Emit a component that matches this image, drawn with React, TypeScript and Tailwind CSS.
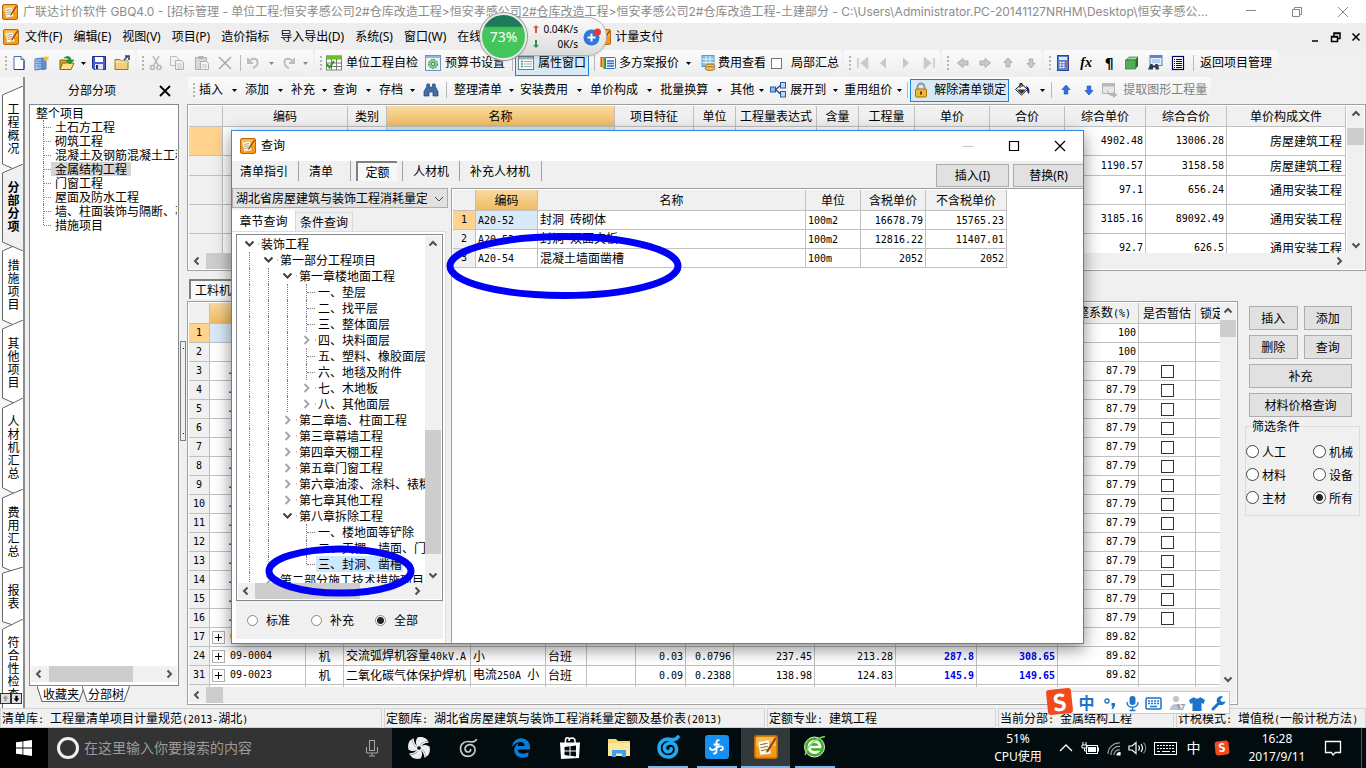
import React from "react";
import { FaEdgeLegacy } from "react-icons/fa6";

const SANS = "font-['Noto_Sans','Noto_Sans_CJK_SC',sans-serif]";
const MONO = "font-['DejaVu_Sans_Mono',monospace] text-[10px]";

/* ---------- text ---------- */

// Sets Latin runs in the half-width face and leaves Chinese runs alone.
function T({ children }: { children: string }) {
  return (
    <>
      {children.split(/([\x20-\x7e]+)/).map((part, i) =>
        i % 2 ? (
          <span key={i} className="whitespace-pre font-['DejaVu_Sans_Mono',monospace] text-[10px]">
            {part}
          </span>
        ) : (
          part
        )
      )}
    </>
  );
}

/* ---------- icons ---------- */

function AppIcon({ className = "size-4" }: { className?: string }) {
  return (
    <svg viewBox="0 0 16 16" className={className} aria-hidden="true">
      <rect x="0.5" y="0.5" width="15" height="15" rx="1.5" fill="#f59a14" stroke="#b8680a" />
      <rect x="1.5" y="1.5" width="13" height="6" fill="#fcc04a" />
      <path d="M2.5 4.5 L10 3 L11.5 12.5 L4 13.5 Z" fill="#fffbe8" stroke="#d9a860" strokeWidth="0.5" />
      <path d="M4 6.5l5-1M4.3 8.5l5-1M4.6 10.5l4-.8" stroke="#8a7450" strokeWidth="0.7" />
      <path d="M14 1.5 L8.5 10 L8 12 L9.8 10.8 L15 2.5 Z" fill="#a5400d" />
    </svg>
  );
}

const icons: Record<string, React.ReactNode> = {
  doc: (
    <>
      <path d="M3 1.500h7l3 3v10H3z" fill="#fff" stroke="#4a6fa5" />
      <path d="M10 1.500v3h3" fill="#cfe0f5" stroke="#4a6fa5" />
      <path d="M3 14.500h10v-9" fill="none" stroke="#1e3f70" />
    </>
  ),
  sheets: (
    <>
      <path d="M2 4l7-1v11l-7 1z" fill="#bcd5f2" stroke="#4a78b8" />
      <path d="M9 3l4 1v10l-4 .5z" fill="#5f92cf" stroke="#4a78b8" />
      <path d="M3 6h5M3 8.500h5M3 11h5M5 4v10M7 4v10" stroke="#5f88c0" strokeWidth="0.8" />
      <path d="M13 0l1 2 2-.5-1 2 1 2-2-.4-1 2-.8-2-2 .4 1-2-1-2 2 .5z" fill="#f5c832" />
    </>
  ),
  open: (
    <>
      <path d="M1 5h5l1 1h5v8H1z" fill="#d9a425" stroke="#8a6510" />
      <path d="M3.500 8H15l-3 6.500H1z" fill="#ffe08a" stroke="#8a6510" />
      <path d="M5 3c4-3 7-1 7 2h3l-4 4-4-4h2.500c0-1.500-2-2.500-4.500-2z" fill="#1f9e2c" stroke="#0c6a17" strokeWidth="0.5" />
    </>
  ),
  save: (
    <>
      <path d="M1.500 1.500h13v13H3l-1.500-1.500z" fill="#4b5bd0" stroke="#1d2880" />
      <rect x="4" y="2" width="8" height="5" fill="#fff" />
      <rect x="4" y="9" width="8" height="5.500" fill="#dfe3f5" />
      <rect x="5" y="10" width="2" height="4" fill="#1d2880" />
    </>
  ),
  folder: (
    <>
      <path d="M1 4.500h5l1.500 1.500H14v8.500H1z" fill="#f0cf7c" stroke="#9c7622" />
      <path d="M1 7h13" stroke="#fff0c0" />
      <path d="M10 5l4-4M11 1h4v4" stroke="#23457a" strokeWidth="1.600" fill="none" />
    </>
  ),
  cut: (
    <>
      <path d="M5 1l5 9M11 1L6 10" stroke="#b5b5b5" strokeWidth="1.500" />
      <circle cx="4.500" cy="12.500" r="2" fill="none" stroke="#b5b5b5" strokeWidth="1.500" />
      <circle cx="11" cy="12.500" r="2" fill="none" stroke="#b5b5b5" strokeWidth="1.500" />
    </>
  ),
  copy: (
    <>
      <path d="M1.500 1.500h6l2 2v7h-8z" fill="#f2f2f2" stroke="#bdbdbd" />
      <path d="M6.500 5.500h6l2 2v7h-8z" fill="#f2f2f2" stroke="#b0b0b0" />
      <path d="M8 9h5M8 11h5M8 13h5" stroke="#c4c4c4" />
    </>
  ),
  paste: (
    <>
      <rect x="1.500" y="2.500" width="11" height="12" fill="#d8d8d8" stroke="#b0b0b0" />
      <rect x="4.500" y="1" width="5" height="3" fill="#b0b0b0" />
      <path d="M6.500 6.500h6l2 2v6h-8z" fill="#f5f5f5" stroke="#b0b0b0" />
      <path d="M8 10h5M8 12h5" stroke="#c4c4c4" />
    </>
  ),
  del: <path d="M2 2l12 12M14 2L2 14" stroke="#a8a8a8" strokeWidth="1.500" />,
  undo: <path d="M3 3v5h5M4 7c3-5 9-4 8.500 1-.3 2.500-2 4-4.500 5" fill="none" stroke="#bcbcbc" strokeWidth="2" />,
  redo: <path d="M13 3v5H8M12 7C9 2 3 3 3.500 8c.3 2.500 2 4 4.500 5" fill="none" stroke="#bcbcbc" strokeWidth="2" />,
  check: (
    <>
      <rect x="0.500" y="1" width="15" height="14" fill="#fff" stroke="#6d8f6d" />
      <rect x="0.500" y="0.500" width="15" height="4" fill="#6abf28" />
      <path d="M5.500 4v11M10.500 4v11M0 8h16M0 11.500h16" stroke="#777" />
      <path d="M1 9l2.500 3.500L8 6" stroke="#2e9c12" strokeWidth="2" fill="none" />
    </>
  ),
  gearDoc: (
    <>
      <rect x="0.500" y="0.500" width="15" height="15" fill="#eaf3fb" stroke="#6a96b8" />
      <rect x="1" y="1" width="14" height="2" fill="#8fb8da" />
      <circle cx="8" cy="9" r="4.500" fill="#8cc78c" stroke="#3d8f4a" strokeDasharray="2 1" />
      <circle cx="8" cy="9" r="1.600" fill="#eaf3fb" stroke="#3d8f4a" />
    </>
  ),
  props: (
    <>
      <rect x="0.500" y="1.500" width="15" height="13" fill="#fff" stroke="#6d7f8f" />
      <rect x="1" y="2" width="14" height="2.500" fill="#9db4c8" />
      <path d="M3 6.500h2M3 9h2M3 11.500h2" stroke="#3f9e5a" strokeWidth="1.300" />
      <path d="M6 6.500h8M6 9h8M6 11.500h8" stroke="#8fa8b8" />
    </>
  ),
  plans: (
    <>
      <rect x="0.500" y="2" width="6" height="10" fill="#e04030" />
      <rect x="2" y="2.500" width="6" height="10.500" fill="#f0c030" />
      <rect x="3.500" y="2" width="6" height="12" fill="#40a840" />
      <rect x="5.500" y="2.500" width="10" height="11" rx="1" fill="#f4f9ff" stroke="#2a6ed0" />
      <path d="M7 6h7M7 8.500h7M7 11h7" stroke="#2a6ed0" strokeWidth="1.300" />
    </>
  ),
  fee: (
    <>
      <rect x="2" y="0.500" width="12" height="11" fill="#7fc4ea" stroke="#4aa0cc" />
      <path d="M2 4h12M2 7.500h12M6 1v10M10 1v10" stroke="#dff2fc" />
      <ellipse cx="10" cy="11" rx="5" ry="2" fill="#e8c070" stroke="#a87820" />
      <ellipse cx="10" cy="13.500" rx="5" ry="2" fill="#e8c070" stroke="#a87820" />
    </>
  ),
  first: <path d="M3 3v10M12.500 3L6.500 8l6 5z" fill="#c8c8c8" stroke="#c8c8c8" strokeWidth="1.500" />,
  prev: <path d="M11 2.500L5 8l6 5.500z" fill="#c8c8c8" />,
  next: <path d="M5 2.500l6 5.500-6 5.500z" fill="#c8c8c8" />,
  last: <path d="M13 3v10M3.500 3L9.500 8l-6 5z" fill="#c8c8c8" stroke="#c8c8c8" strokeWidth="1.500" />,
  left: <path d="M2.500 8L8 3.500V6h5v4H8v2.500z" fill="#c9c9c9" stroke="#adadad" />,
  right: <path d="M13.500 8L8 3.500V6H3v4h5v2.500z" fill="#c9c9c9" stroke="#adadad" />,
  up: <path d="M8 3l4 4.500h-2.200V12H6.200V7.500H4z" fill="#c9c9c9" stroke="#adadad" />,
  down: <path d="M8 13l4-4.500h-2.200V4H6.200v4.500H4z" fill="#c9c9c9" stroke="#adadad" />,
  upBlack: <path d="M8 2l5 6H10v5H6V8H3z" fill="#999" />,
  downBlack: <path d="M8 14l5-6H10V3H6v5H3z" fill="#000" />,
  upBlue: <path d="M8 3l4 4.500h-2.200V12H6.200V7.500H4z" fill="#2f6fe8" stroke="#1c4fb8" strokeWidth="0.700" />,
  downBlue: <path d="M8 13l4-4.500h-2.200V4H6.200v4.500H4z" fill="#2f6fe8" stroke="#1c4fb8" strokeWidth="0.700" />,
  calc: (
    <>
      <rect x="2.500" y="0.500" width="11" height="15" fill="#5c7fd0" stroke="#2c4590" />
      <rect x="4" y="2" width="8" height="3" fill="#d8ecf5" />
      <path d="M4.500 7.500h2M7.500 7.500h2M4.500 10h2M7.500 10h2M4.500 12.500h2M7.500 12.500h2" stroke="#fff" strokeWidth="1.400" />
      <path d="M10.500 7.500h1.500M10.500 10h1.500M10.500 12.500h1.500" stroke="#f05040" strokeWidth="1.400" />
    </>
  ),
  cube: (
    <>
      <path d="M2 5l3-3h9l-2.500 3z" fill="#9ed69a" stroke="#2f7a35" strokeWidth="0.700" />
      <path d="M11.500 5L14 2v9l-2.500 3z" fill="#256b2b" />
      <rect x="1.500" y="5" width="10" height="9" fill="#55ad55" stroke="#2f7a35" strokeWidth="0.700" />
    </>
  ),
  find: (
    <>
      <rect x="3" y="0.500" width="12" height="10" fill="#e3eefb" stroke="#5b87c4" />
      <rect x="3" y="0.500" width="12" height="2.500" fill="#5b87c4" />
      <path d="M5 5h8M5 7h8" stroke="#8fb0da" />
      <path d="M2.500 9l1-2h2l.5 2h2l.5-2h2l1 2 .5 3.500H8.500v-2H6v2H1z" fill="#2d3a4e" transform="translate(0 2)" />
    </>
  ),
  list: (
    <>
      <rect x="2.500" y="1.500" width="11" height="13" fill="#fff" stroke="#000060" strokeWidth="1.200" />
      <path
        d="M4 4.500h1M4 6.500h1M4 8.500h1M4 10.500h1M4 12.500h1M6 4.500h6M6 6.500h6M6 8.500h6M6 10.500h6M6 12.500h6"
        stroke="#000060"
      />
    </>
  ),
  binoculars: (
    <path
      d="M4 2h2.500v3h3V2H12l.5 3 2.500 4.500V14h-5v-4H6v4H1V9.500L3.500 5z"
      fill="#3f6ea8"
      stroke="#1e4478"
      strokeWidth="0.700"
    />
  ),
  expand: (
    <>
      <rect x="0.500" y="5" width="5" height="5" fill="#8fb8ea" stroke="#2a5ea8" />
      <rect x="10.500" y="0.500" width="5" height="5.500" fill="#bcd7f5" stroke="#2a5ea8" />
      <rect x="10.500" y="9.500" width="5" height="5.500" fill="#bcd7f5" stroke="#2a5ea8" />
      <path d="M5.500 7.500l5-4M5.500 7.500l5 4.500" stroke="#1b3f80" strokeWidth="1.300" />
    </>
  ),
  lock: (
    <>
      <path d="M4.500 8V5a3.500 3.500 0 0 1 7 0v3" fill="none" stroke="#8f8f8f" strokeWidth="1.800" />
      <rect x="2.500" y="7" width="11" height="8" rx="1" fill="#f2b632" stroke="#a8700f" />
      <path d="M8 9.500v3" stroke="#5a3a05" strokeWidth="2" />
    </>
  ),
  paint: (
    <>
      <path d="M7.500 2l6 5.500-6 5.500-6-5.500z" fill="#fff" stroke="#111" />
      <path d="M3 7.500h9L7.500 12z" fill="#333" />
      <path d="M6 6V1.500h2V5" fill="none" stroke="#111" />
      <path d="M12 4c3 1 4 4 3 8-2-1-1.500-3-2-4.500z" fill="#101f80" />
    </>
  ),
  extract: (
    <>
      <rect x="0.500" y="1.500" width="12" height="10" fill="#e8e8e8" stroke="#b4b4b4" />
      <rect x="0.500" y="1.500" width="12" height="3" fill="#b9b9b9" />
      <path d="M5 7c2 5 5 4.500 6 4.500V9.500l4.500 3.500-4.500 3v-2c-4 0-6-2-6-7z" fill="#b4b4b4" />
    </>
  ),
};

function Icon({ name, className = "size-4" }: { name: string; className?: string }) {
  return (
    <svg viewBox="0 0 16 16" className={`shrink-0 ${className}`} aria-hidden="true">
      {icons[name]}
    </svg>
  );
}

/* ---------- toolbar pieces ---------- */

function Grip() {
  return (
    <span className="flex w-[11px] shrink-0 flex-col items-center gap-[2px]">
      {[0, 1, 2, 3].map((i) => (
        <i key={i} className="size-[2px] bg-[#b4b4b4]" />
      ))}
    </span>
  );
}
function Tool({ name, label, className = "w-[23px]" }: { name: string; label: string; className?: string }) {
  return (
    <button aria-label={label} className={`flex h-[22px] shrink-0 items-center justify-center ${className}`}>
      <Icon name={name} />
    </button>
  );
}
function Caret({ className = "w-[22px]", gray = false }: { className?: string; gray?: boolean }) {
  return (
    <span className={`flex shrink-0 items-center justify-center ${className}`}>
      <svg viewBox="0 0 5 3" className="h-[3px] w-[5px]" aria-hidden="true">
        <path d="M0 0h5L2.500 3z" fill={gray ? "#888" : "#000"} />
      </svg>
    </span>
  );
}
function Sep({ className = "mx-1" }: { className?: string }) {
  return <i className={`h-4 w-px shrink-0 bg-[#b8b8b8] ${className}`} />;
}
const group = "flex h-[26px] shrink-0 items-center rounded-r bg-linear-to-b from-[#fbfbfb] to-[#eeeeee]";

/* ---------- scroll bars ---------- */

function Arrow({ dir, className = "size-4" }: { dir: "up" | "down" | "left" | "right"; className?: string }) {
  const d = {
    up: "M4.500 9.500L8 6l3.500 3.500",
    down: "M4.500 6.500L8 10l3.500-3.500",
    left: "M9.500 4.500L6 8l3.500 3.500",
    right: "M6.500 4.500L10 8l-3.500 3.500",
  }[dir];
  return (
    <svg viewBox="0 0 16 16" className={`shrink-0 ${className}`} aria-hidden="true">
      <path d={d} fill="none" stroke="#505050" strokeWidth="2" />
    </svg>
  );
}
function VScroll({ thumb, className = "w-4" }: { thumb: string; className?: string }) {
  return (
    <div className={`flex shrink-0 flex-col items-center justify-between bg-[#f0f0f0] ${className}`}>
      <Arrow dir="up" />
      <div className="flex w-full flex-1 flex-col">
        <div className={`w-full bg-[#cdcdcd] ${thumb}`} />
      </div>
      <Arrow dir="down" />
    </div>
  );
}
function HScroll({ thumb, className = "" }: { thumb: string; className?: string }) {
  return (
    <div className={`flex h-4 shrink-0 items-stretch bg-[#f0f0f0] ${className}`}>
      <Arrow dir="left" />
      <div className="flex flex-1">
        <div className={`h-full bg-[#cdcdcd] ${thumb}`} />
      </div>
      <Arrow dir="right" />
    </div>
  );
}

/* ---------- window bars ---------- */

function TitleBar() {
  return (
    <header className="flex h-[23px] shrink-0 items-center bg-white font-['Inter','Noto_Sans_CJK_SC',sans-serif] text-xs text-[#8c8c8c]">
      <AppIcon className="ml-[2px] size-4 shrink-0" />
      <h1 className="ml-[5px] min-w-0 flex-1 overflow-hidden whitespace-nowrap">
        广联达计价软件 GBQ4.0 - [招标管理 - 单位工程:恒安孝感公司2#仓库改造工程&gt;恒安孝感公司2#仓库改造工程&gt;恒安孝感公司2#仓库改造工程-土建部分 -
        C:\Users\Administrator.PC-20141127NRHM\Desktop\恒安孝感公...
      </h1>
      <div className="flex shrink-0">
        {[
          ["最小化", "M3 6.500h10"],
          ["还原", "M3.500 5.500h7v7h-7zM5.500 5.500v-2h7v7h-2"],
          ["关闭", "M3 3l10 10M13 3L3 13"],
        ].map(([label, d]) => (
          <button key={label} aria-label={label} className="flex h-[22px] w-[46px] items-center justify-center">
            <svg viewBox="0 0 16 16" className="size-4">
              <path d={d} fill="none" stroke="#888" />
            </svg>
          </button>
        ))}
      </div>
    </header>
  );
}

function MenuBar() {
  return (
    <nav className={`flex h-[27px] shrink-0 items-center bg-[#eeeeee] text-xs text-black ${SANS}`}>
      <AppIcon className="ml-[3px] size-4 shrink-0" />
      <div className="ml-[6px] flex gap-[11px]">
        {["文件(F)", "编辑(E)", "视图(V)", "项目(P)", "造价指标", "导入导出(D)", "系统(S)", "窗口(W)"].map((m) => (
          <button key={m}>{m}</button>
        ))}
        <button className="w-[138px] text-left">在线</button>
      </div>
      <button className="flex items-center gap-1">
        <AppIcon />
        计量支付
      </button>
      <div className="mr-[2px] ml-auto flex gap-1">
        {[
          ["最小化文档", "M4 12h6"],
          ["还原文档", "M3.500 7.500h6v5h-6zM6 7V4h6v5.500h-2M3 8h7M6 4.500h6"],
          ["关闭文档", "M4.500 4.500l7 7M11.500 4.500l-7 7"],
        ].map(([label, d]) => (
          <button key={label} aria-label={label}>
            <svg viewBox="0 0 16 16" className="size-4">
              <path d={d} fill="none" stroke="#000" strokeWidth="1.500" />
            </svg>
          </button>
        ))}
      </div>
    </nav>
  );
}

function MainToolbar() {
  return (
    <div className={`flex h-[27px] shrink-0 items-start gap-[2px] text-xs ${SANS}`}>
      <div className={group}>
        <Grip />
        <Tool name="doc" label="新建" className="w-4" />
        <Tool name="sheets" label="新建单位工程" className="w-[28px]" />
        <Tool name="open" label="打开" />
        <Caret className="w-[11px]" />
        <Tool name="save" label="保存" className="w-5" />
        <Tool name="folder" label="另存" className="w-[26px]" />
      </div>
      <div className={group}>
        <Grip />
        <Tool name="cut" label="剪切" className="w-4" />
        <Tool name="copy" label="复制" className="w-[26px]" />
        <Tool name="paste" label="粘贴" />
        <Tool name="del" label="删除" />
        <Sep />
        <Tool name="undo" label="撤销" className="w-4" />
        <Caret gray className="w-5" />
        <Tool name="redo" label="重做" className="w-4" />
        <Caret gray className="w-4" />
      </div>
      <div className={`${group} pr-[3px]`}>
        <Grip />
        <button className="flex shrink-0 items-center gap-1">
          <Icon name="check" />
          单位工程自检
        </button>
        <button className="ml-[7px] flex shrink-0 items-center gap-1">
          <Icon name="gearDoc" />
          预算书设置
        </button>
        <Sep className="mr-[2px] ml-[7px]" />
        <button className="flex h-[26px] shrink-0 items-center gap-1 border border-[#1f84d6] bg-[#d8e8f5] px-[2px]">
          <Icon name="props" />
          属性窗口
        </button>
        <Sep className="mx-[5px]" />
        <button className="flex shrink-0 items-center gap-[3px]">
          <Icon name="plans" />
          多方案报价
        </button>
        <Caret className="w-[18px]" />
        <button className="ml-[3px] flex shrink-0 items-center gap-[2px]">
          <Icon name="fee" />
          费用查看
        </button>
        <label className="ml-[5px] flex shrink-0 items-center gap-[9px]">
          <input type="checkbox" className="size-[11px] appearance-none border border-[#777] bg-white" />
          局部汇总
        </label>
      </div>
      <div className={group}>
        <Grip />
        <Tool name="first" label="首条" className="w-4" />
        <Tool name="prev" label="上一条" />
        <Tool name="next" label="下一条" />
        <Tool name="last" label="末条" />
      </div>
      <div className={group}>
        <Grip />
        <Tool name="left" label="左移" className="w-[20px]" />
        <Tool name="right" label="右移" />
        <Tool name="up" label="上移" />
        <Tool name="down" label="下移" />
      </div>
      <div className={`${group} pr-[6px]`}>
        <Grip />
        <Tool name="calc" label="计算器" className="w-4" />
        <button aria-label="函数" className="w-[30px] shrink-0 font-['Liberation_Serif',serif] text-sm font-bold italic leading-4">
          fx
        </button>
        <button aria-label="段落" className="w-4 shrink-0 font-['DejaVu_Sans',sans-serif] text-sm font-bold leading-4">
          ¶
        </button>
        <Tool name="cube" label="图块" className="w-[30px]" />
        <Tool name="find" label="查找" className="w-4" />
        <Tool name="list" label="列表" className="w-[30px]" />
        <Sep className="mr-[6px]" />
        <button className="shrink-0">返回项目管理</button>
      </div>
    </div>
  );
}

function GridToolbar() {
  return (
    <div className={`flex h-[27px] shrink-0 pl-px text-xs ${SANS}`}>
      <div className={`${group} pr-1`}>
        <Grip />
        <button>插入</button>
        <Caret />
        <button>添加</button>
        <Caret />
        <button>补充</button>
        <Caret className="w-[18px]" />
        <button>查询</button>
        <Caret />
        <button>存档</button>
        <Caret className="w-[18px]" />
        <Tool name="binoculars" label="查找" className="w-[19px]" />
        <Sep className="mr-[7px] ml-[6px]" />
        <button>整理清单</button>
        <Caret className="w-[18px]" />
        <button>安装费用</button>
        <Caret />
        <button>单价构成</button>
        <Caret />
        <button>批量换算</button>
        <Caret />
        <button>其他</button>
        <Caret className="w-[14px]" />
        <button className="flex items-center gap-[4px]">
          <Icon name="expand" className="ml-[2px] size-4" />
          展开到
        </button>
        <Caret className="w-[18px]" />
        <button>重用组价</button>
        <Caret className="w-[14px]" />
        <Sep className="mr-[2px] ml-px" />
        <button className="flex h-[23px] items-center gap-[5px] border border-[#1f84d6] bg-[#d8e8f5] px-[2px]">
          <Icon name="lock" />
          解除清单锁定
        </button>
        <Tool name="paint" label="填充" className="w-[26px]" />
        <Caret className="w-[14px]" />
        <Sep className="mr-[2px] ml-[2px]" />
        <Tool name="upBlue" label="上移" />
        <Tool name="downBlue" label="下移" />
        <button disabled className="ml-[2px] flex items-center gap-[5px] text-[#808080]">
          <Icon name="extract" />
          提取图形工程量
        </button>
      </div>
    </div>
  );
}

/* ---------- left side ---------- */

function SideTabs() {
  const tabs = ["工程概况", "分部分项", "措施项目", "其他项目", "人材机汇总", "费用汇总", "报表", "符合性检查"];
  return (
    <div className="relative w-[25px] shrink-0 overflow-hidden border-r-2 border-[#8c8c8c] bg-[#f6f6f6] pt-[13px]">
      {tabs.map((t) => {
        const active = t === "分部分项";
        return (
          <button
            key={t}
            className={`relative flex w-full justify-center pt-3 pb-[14px] pl-1 text-xs leading-[13px] ${active ? "z-10 font-bold" : ""}`}
          >
            <svg
              viewBox="0 0 23 78"
              preserveAspectRatio="none"
              className="absolute -top-1 left-0 h-[calc(100%+9px)] w-full"
              aria-hidden="true"
            >
              <path
                d="M23 0L2.500 8V70L23 78"
                fill={active ? "#f0f0f0" : "#fff"}
                stroke="#666"
                vectorEffect="non-scaling-stroke"
              />
            </svg>
            <span className="relative w-3 break-all">{t}</span>
          </button>
        );
      })}
      <div className="absolute bottom-[4px] left-0 z-20 flex">
        {[
          ["upBlack", "上翻"],
          ["downBlack", "下翻"],
        ].map(([d, label]) => (
          <button key={d} aria-label={label} className="border border-[#333] bg-[#e0e0e0]">
            <Icon name={d} className="size-[9px]" />
          </button>
        ))}
      </div>
    </div>
  );
}

function SectionPanel() {
  const rows = [
    "土石方工程",
    "砌筑工程",
    "混凝土及钢筋混凝土工程",
    "金属结构工程",
    "门窗工程",
    "屋面及防水工程",
    "墙、柱面装饰与隔断、幕墙工程",
    "措施项目",
  ];
  return (
    <section className="flex w-[162px] shrink-0 flex-col pr-2 pl-1 text-xs">
      <div className={`flex h-[27px] shrink-0 items-center ${SANS}`}>
        <h2 className="ml-[39px]">分部分项</h2>
        <button aria-label="关闭面板" className="mr-[8px] ml-auto">
          <svg viewBox="0 0 12 12" className="size-3">
            <path d="M1 1l10 10M11 1L1 11" stroke="#000" strokeWidth="1.800" />
          </svg>
        </button>
      </div>
      <div className="flex flex-1 flex-col border border-[#828790] bg-white">
        <ul className="min-h-0 flex-1 overflow-hidden pt-px pr-px leading-[14px] whitespace-nowrap">
          <li className="pl-[6px]">整个项目</li>
          {rows.map((r, i) => (
            <li key={r} className="flex h-[14px] items-start overflow-hidden pl-[13px]">
              <span
                className={`w-0 shrink-0 border-l border-dotted border-[#808080] ${i === rows.length - 1 ? "h-[7px]" : "h-[14px]"}`}
              />
              <span className="mt-[7px] w-[7px] shrink-0 border-t border-dotted border-[#808080]" />
              <span className={`shrink-0 px-1 ${r === "金属结构工程" ? "bg-[#d4d4d4]" : ""}`}>{r}</span>
            </li>
          ))}
        </ul>
        <HScroll thumb="ml-[2px] w-[84px]" className="mx-px mb-[3px]" />
      </div>
      <div className="flex h-[22px] shrink-0 pl-[8px]">
        {["收藏夹", "分部树"].map((t) => (
          <button key={t} className="relative -mr-[3px] h-4 px-[6px] leading-4">
            <svg viewBox="0 0 48 16" preserveAspectRatio="none" className="absolute inset-0 size-full" aria-hidden="true">
              <path d="M0 0L5 15.500H42L47.500 0" fill="#fff" stroke="#666" />
            </svg>
            <span className="relative">{t}</span>
          </button>
        ))}
      </div>
    </section>
  );
}

/* ---------- grids ---------- */

const cell = "overflow-hidden border-r border-b border-[#c0c0c0] whitespace-nowrap";
const orange = "bg-linear-to-b from-[#f9d9a0] to-[#efbb61]";
const gridTable = "table-fixed border-separate border-spacing-0 text-xs leading-4";

function BillGrid() {
  const cols: [string, string][] = [
    ["w-[34px]", ""],
    ["w-[125px]", "编码"],
    ["w-[39px]", "类别"],
    ["w-[228px]", "名称"],
    ["w-[79px]", "项目特征"],
    ["w-[42px]", "单位"],
    ["w-[81px]", "工程量表达式"],
    ["w-[42px]", "含量"],
    ["w-[56px]", "工程量"],
    ["w-[75px]", "单价"],
    ["w-[75px]", "合价"],
    ["w-[81px]", "综合单价"],
    ["w-[81px]", "综合合价"],
    ["w-[119px]", "单价构成文件"],
  ];
  const rows: [string, string, string, string][] = [
    ["h-[29px]", "4902.48", "13006.28", "房屋建筑工程"],
    ["h-[20px]", "1190.57", "3158.58", "房屋建筑工程"],
    ["h-[29px]", "97.1", "656.24", "通用安装工程"],
    ["h-[29px]", "3185.16", "89092.49", "通用安装工程"],
    ["h-[29px]", "92.7", "626.5", "通用安装工程"],
  ];
  return (
    <div className="flex h-[167px] shrink-0 flex-col border border-[#a0a0a0] bg-white p-px">
      <div className="flex min-h-0 flex-1">
        <div className="min-w-0 flex-1 overflow-hidden">
          <table className={`${gridTable} w-[1157px]`}>
            <thead>
              <tr>
                {cols.map(([w, h], i) => (
                  <th key={i} className={`${cell} ${w} h-[21px] font-normal ${h === "名称" ? orange : "bg-[#f0f0f0]"}`}>
                    {h}
                  </th>
                ))}
              </tr>
            </thead>
            <tbody>
              {rows.map(([h, a, b, c], r) => (
                <tr key={r}>
                  <th className={`${cell} ${h} ${r ? "bg-[#f0f0f0]" : "bg-[#ffd28d]"}`} />
                  {cols.slice(1, 11).map(([, n]) => (
                    <td key={n} className={`${cell} ${r === 0 && n === "名称" ? "bg-[#d9e9f7]" : ""}`} />
                  ))}
                  <td className={`${cell} pr-[2px] text-right ${MONO}`}>{a}</td>
                  <td className={`${cell} pr-[2px] text-right ${MONO}`}>{b}</td>
                  <td className={`${cell} pr-[3px] text-right`}>{c}</td>
                </tr>
              ))}
            </tbody>
          </table>
        </div>
        <VScroll className="w-[17px]" thumb="mt-[6px] h-[17px]" />
      </div>
      <HScroll thumb="ml-px w-[120px]" className="pr-[17px]" />
    </div>
  );
}

function ResourceGrid() {
  const widths = [
    "w-[21px]", "w-[96px]", "w-[38px]", "w-[127px]", "w-[75px]", "w-[41px]", "w-[49px]", "w-[50px]",
    "w-[48px]", "w-[81px]", "w-[81px]", "w-[81px]", "w-[81px]", "w-[81px]", "w-[57px]", "w-[60px]",
  ];
  const heads = ["", "", "", "", "", "", "", "", "", "", "", "", "", "调整系数(%)", "是否暂估", "锁定"];
  const nums = Array.from({ length: 17 }, (_, i) => i + 1).concat([24, 31]);
  const detail: Record<number, string[]> = {
    17: ["0", "", "", "", "", "", "", "", "", "", "", ""],
    24: ["09-0004", "机", "交流弧焊机容量40kV.A", "小", "台班", "", "0.03", "0.0796", "237.45", "213.28", "287.8", "308.65"],
    31: ["09-0023", "机", "二氧化碳气体保护焊机", "电流250A 小", "台班", "", "0.09", "0.2388", "138.98", "124.83", "145.9", "149.65"],
  };
  return (
    <div className="flex min-w-0 flex-1 flex-col border border-[#a0a0a0] bg-white p-px">
      <div className="flex min-h-0 flex-1">
        <div className="min-w-0 flex-1 overflow-hidden">
          <table className={`${gridTable} w-[1067px]`}>
            <thead>
              <tr>
                {heads.map((h, i) => (
                  <th
                    key={i}
                    className={`${cell} ${widths[i]} h-[21px] font-normal ${i === 15 ? "pl-1 text-left" : ""} ${i === 1 ? orange : "bg-[#f0f0f0]"}`}
                  >
                    <T>{h}</T>
                  </th>
                ))}
              </tr>
            </thead>
            <tbody>
              {nums.map((n) => {
                const d = detail[n];
                const factor = n <= 2 ? "100" : n <= 16 ? "87.79" : "89.82";
                return (
                  <tr key={n}>
                    <th className={`${cell} h-[19px] font-normal ${MONO} ${n === 1 ? "bg-[#ffd28d]" : "bg-[#f0f0f0]"}`}>{n}</th>
                    <td className={`${cell} ${n === 1 ? "bg-[#d9e9f7]" : ""} ${MONO}`}>
                      {d ? (
                        <span className="flex items-center gap-[5px] pl-[2px]">
                          <button
                            aria-label="展开"
                            className="flex size-[13px] items-center justify-center border border-[#b0b0b0] bg-white"
                          >
                            <svg viewBox="0 0 7 7" className="size-[7px]">
                              <path d="M0 3.500h7M3.500 0v7" stroke="#000" />
                            </svg>
                          </button>
                          {d[0]}
                        </span>
                      ) : (
                        n > 2 && <span className="pl-[17px]">.</span>
                      )}
                    </td>
                    {Array.from({ length: 11 }, (_, i) => (
                      <td
                        key={i}
                        className={`${cell} px-[2px] ${i === 0 ? "text-center" : i > 4 ? "text-right" : ""} ${i > 8 ? "font-bold text-[#0000f0]" : ""}`}
                      >
                        <T>{d ? d[i + 1] : ""}</T>
                      </td>
                    ))}
                    <td className={`${cell} pr-[2px] text-right ${MONO}`}>{factor}</td>
                    <td className={cell}>
                      {n > 2 && n < 17 && (
                        <input
                          type="checkbox"
                          aria-label={`暂估 ${n}`}
                          className="mx-auto block size-[13px] appearance-none border border-[#333] bg-white"
                        />
                      )}
                    </td>
                    <td className={cell} />
                  </tr>
                );
              })}
              <tr>
                {widths.map((w, i) => (
                  <td key={i} className={`${cell} h-[19px] ${i === 0 ? "bg-[#f0f0f0]" : ""}`} />
                ))}
              </tr>
            </tbody>
          </table>
        </div>
        <VScroll className="w-4" thumb="mt-px h-[17px]" />
      </div>
      <HScroll thumb="ml-px w-[17px]" className="pr-4" />
    </div>
  );
}

const winButton = "border border-[#adadad] bg-[#e1e1e1] text-xs";
const radio =
  "appearance-none rounded-full border bg-white checked:bg-[radial-gradient(circle,#222_0_3px,#fff_4px)]";

function ActionPane() {
  return (
    <aside className="w-[128px] shrink-0 pt-[5px] pr-[6px] pl-[7px] text-xs">
      <div className="mr-[8px] ml-1 grid auto-rows-[24px] grid-cols-2 gap-x-[6px] gap-y-[5px]">
        <button className={winButton}>插入</button>
        <button className={winButton}>添加</button>
        <button className={winButton}>删除</button>
        <button className={winButton}>查询</button>
        <button className={`${winButton} col-span-2`}>补充</button>
        <button className={`${winButton} col-span-2`}>材料价格查询</button>
      </div>
      <fieldset className="mt-[2px] border border-[#dcdcdc] pt-[7px] pb-[6px]">
        <legend className="ml-[5px] px-px leading-[14px]">筛选条件</legend>
        <div className="grid grid-cols-[67px_1fr]">
          {["人工", "机械", "材料", "设备", "主材", "所有"].map((r) => (
            <label key={r} className="flex h-[23px] items-center gap-[3px] whitespace-nowrap">
              <input
                type="radio"
                name="filter"
                defaultChecked={r === "所有"}
                className={`size-[13px] shrink-0 border-[#444] ${radio}`}
              />
              {r}
            </label>
          ))}
        </div>
      </fieldset>
    </aside>
  );
}

/* ---------- query dialog ---------- */

type Node = { t: string; level: number; lines: boolean[]; kind: "open" | "closed" | "leaf" | "end" };
const L3 = [true, true, true];
const tree: Node[] = [
  { t: "装饰工程", level: 0, lines: [], kind: "open" },
  { t: "第一部分工程项目", level: 1, lines: [true], kind: "open" },
  { t: "第一章楼地面工程", level: 2, lines: [true, true], kind: "open" },
  { t: "一、垫层", level: 3, lines: L3, kind: "leaf" },
  { t: "二、找平层", level: 3, lines: L3, kind: "leaf" },
  { t: "三、整体面层", level: 3, lines: L3, kind: "leaf" },
  { t: "四、块料面层", level: 3, lines: L3, kind: "closed" },
  { t: "五、塑料、橡胶面层", level: 3, lines: L3, kind: "leaf" },
  { t: "六、地毯及附件", level: 3, lines: L3, kind: "leaf" },
  { t: "七、木地板", level: 3, lines: L3, kind: "closed" },
  { t: "八、其他面层", level: 3, lines: L3, kind: "closed" },
  { t: "第二章墙、柱面工程", level: 2, lines: [true, true], kind: "closed" },
  { t: "第三章幕墙工程", level: 2, lines: [true, true], kind: "closed" },
  { t: "第四章天棚工程", level: 2, lines: [true, true], kind: "closed" },
  { t: "第五章门窗工程", level: 2, lines: [true, true], kind: "closed" },
  { t: "第六章油漆、涂料、裱糊工程", level: 2, lines: [true, true], kind: "closed" },
  { t: "第七章其他工程", level: 2, lines: [true, true], kind: "closed" },
  { t: "第八章拆除工程", level: 2, lines: [true, true], kind: "open" },
  { t: "一、楼地面等铲除", level: 3, lines: [true, true, false], kind: "leaf" },
  { t: "二、天棚、墙面、门窗", level: 3, lines: [true, true, false], kind: "leaf" },
  { t: "三、封洞、凿槽", level: 3, lines: [true, true, false], kind: "end" },
  { t: "第二部分施工技术措施项目", level: 1, lines: [true], kind: "closed" },
];

function TreeRow({ node }: { node: Node }) {
  return (
    <li className="flex h-4 pl-[2px] leading-4 whitespace-nowrap">
      {node.lines.map((on, i) => (
        <span key={i} className="w-[19px] shrink-0 pl-[9px]">
          {on && <span className="block h-4 border-l border-dotted border-[#808080]" />}
        </span>
      ))}
      <span className="flex w-[19px] shrink-0 items-start">
        {node.kind === "open" && (
          <svg viewBox="0 0 19 16" className="h-4 w-[19px]">
            <path d="M5.500 5.500L9.500 9.500L13.500 5.500" fill="none" stroke="#404040" strokeWidth="2" />
            <path d="M18 8h1" stroke="#808080" />
          </svg>
        )}
        {node.kind === "closed" && (
          <svg viewBox="0 0 19 16" className="h-4 w-[19px]">
            <path d="M7.500 4L11.500 8L7.500 12" fill="none" stroke="#a6a6a6" strokeWidth="2" />
            <path d="M18 8h1" stroke="#808080" />
          </svg>
        )}
        {(node.kind === "leaf" || node.kind === "end") && (
          <>
            <span
              className={`ml-[9px] w-px border-l border-dotted border-[#808080] ${node.kind === "end" ? "h-2" : "h-4"}`}
            />
            <span className="mt-2 w-[8px] border-t border-dotted border-[#808080]" />
          </>
        )}
      </span>
      <span className={`shrink-0 pr-px pl-[2px] ${node.kind === "end" ? "bg-[#cce8ff]" : ""}`}>{node.t}</span>
    </li>
  );
}

function QueryGrid() {
  const cols: [string, string][] = [
    ["w-[23px]", ""],
    ["w-[62px]", "编码"],
    ["w-[268px]", "名称"],
    ["w-[55px]", "单位"],
    ["w-[65px]", "含税单价"],
    ["w-[81px]", "不含税单价"],
  ];
  const rows = [
    ["A20-52", "封洞 砖砌体", "100m2", "16678.79", "15765.23"],
    ["A20-53", "封洞 双面夹板", "100m2", "12816.22", "11407.01"],
    ["A20-54", "混凝土墙面凿槽", "100m", "2052", "2052"],
  ];
  return (
    <div className="min-w-0 flex-1 overflow-hidden border-t border-l border-[#a0a0a0] bg-white pt-px pl-px">
      <table className={`${gridTable} w-[554px]`}>
        <thead>
          <tr>
            {cols.map(([w, h]) => (
              <th key={h} className={`${cell} ${w} h-[21px] font-normal ${h === "编码" ? orange : "bg-[#f0f0f0]"}`}>
                {h}
              </th>
            ))}
          </tr>
        </thead>
        <tbody>
          {rows.map((r, i) => (
            <tr key={r[0]}>
              <th className={`${cell} h-[19px] font-normal ${MONO} ${i ? "bg-[#f0f0f0]" : "bg-[#ffd28d]"}`}>{i + 1}</th>
              {r.map((v, c) => (
                <td
                  key={c}
                  className={`${cell} px-[2px] ${c > 2 ? "text-right" : ""} ${i === 0 && c === 0 ? "bg-[#d9e9f7]" : ""}`}
                >
                  <T>{v}</T>
                </td>
              ))}
            </tr>
          ))}
        </tbody>
      </table>
    </div>
  );
}

function QueryDialog() {
  return (
    <section
      role="dialog"
      aria-label="查询"
      className="absolute top-[130px] left-[231px] flex h-[514px] w-[853px] flex-col border border-[#2f8be6] bg-[#f0f0f0] text-xs shadow-[0_5px_16px_rgba(0,0,0,0.45)]"
    >
      <header className={`flex h-[30px] shrink-0 items-center bg-white ${SANS}`}>
        <AppIcon className="ml-2 size-4" />
        <h2 className="ml-[5px]">查询</h2>
        <div className="ml-auto flex">
          {[
            ["最小化", "M3 8.500h10", "#c8c8c8"],
            ["最大化", "M3.500 3.500h9v9h-9z", "#000"],
            ["关闭", "M3 3l10 10M13 3L3 13", "#000"],
          ].map(([label, d, s]) => (
            <button key={label} aria-label={label} className="flex h-[28px] w-[46px] items-center justify-center">
              <svg viewBox="0 0 16 16" className="size-4">
                <path d={d} fill="none" stroke={s} strokeWidth="1.200" />
              </svg>
            </button>
          ))}
        </div>
      </header>
      <div className="flex h-[27px] shrink-0 items-start pl-2">
        <button className="h-5">清单指引</button>
        <i className="ml-[10px] h-5 w-px bg-[#a0a0a0]" />
        <button className="ml-[10px] h-5">清单</button>
        <i className="ml-[17px] h-5 w-px bg-[#a0a0a0]" />
        <button className="ml-[5px] h-5 w-[41px] border-t-2 border-l-2 border-[#808080] bg-[#f8f8f8] leading-[18px]">定额</button>
        <i className="ml-[5px] h-5 w-px bg-[#a0a0a0]" />
        <button className="ml-[10px] h-5">人材机</button>
        <i className="ml-[10px] h-5 w-px bg-[#a0a0a0]" />
        <button className="ml-[10px] h-5">补充人材机</button>
        <i className="ml-[11px] h-5 w-px bg-[#a0a0a0]" />
        <div className={`mt-[3px] ml-auto flex gap-1 ${SANS}`}>
          <button className={`${winButton} h-[23px] w-[73px]`}>插入(I)</button>
          <button className={`${winButton} h-[23px] w-[70px] border-r-0`}>替换(R)</button>
        </div>
      </div>
      <div className="flex min-h-0 flex-1">
        <div className="flex w-[216px] shrink-0 flex-col">
          <div className="relative h-5 shrink-0">
            <select
              aria-label="定额库"
              className="h-5 w-full appearance-none border border-[#adadad] bg-[#e1e1e1] pr-5 pl-[3px] text-xs leading-4 text-black"
            >
              <option>湖北省房屋建筑与装饰工程消耗量定</option>
            </select>
            <svg viewBox="0 0 10 6" className="absolute top-[8px] right-1 h-[6px] w-[10px]" aria-hidden="true">
              <path d="M1 1l4 4 4-4" fill="none" stroke="#444" />
            </svg>
          </div>
          <div className="flex h-[23px] shrink-0 items-end">
            <button className="h-[21px] w-[64px] border-r border-[#d9d9d9] bg-white">章节查询</button>
            <button className="h-[19px] w-[57px] border-t border-r border-[#d9d9d9]">条件查询</button>
          </div>
          <div className="mr-[2px] flex min-h-0 flex-1 flex-col border-t border-r border-[#dcdcdc] bg-white pt-[2px] pr-[2px] pb-1 pl-1">
            <div className="flex min-h-0 flex-1 flex-col border border-[#828790] bg-white p-px">
              <div className="flex min-h-0 flex-1">
                <ul className="min-w-0 flex-1 overflow-hidden">
                  {tree.map((n) => (
                    <TreeRow key={n.t} node={n} />
                  ))}
                </ul>
                <VScroll className="w-4" thumb="mt-[178px] h-[124px]" />
              </div>
              <HScroll thumb="ml-px w-[105px]" className="pr-4" />
            </div>
            <div className="flex h-[38px] shrink-0 items-center gap-[21px] bg-[#f0f0f0] pl-[11px]">
              {["标准", "补充", "全部"].map((r) => (
                <label key={r} className="flex items-center">
                  <input
                    type="radio"
                    name="scope"
                    defaultChecked={r === "全部"}
                    className={`mr-2 size-[11px] border-[#888] ${radio}`}
                  />
                  {r}
                </label>
              ))}
            </div>
          </div>
        </div>
        <div className="w-[3px] shrink-0" />
        <QueryGrid />
      </div>
    </section>
  );
}

/* ---------- bottom bars ---------- */

function StatusBar() {
  const items: [string, string][] = [
    ["w-[382px]", "清单库: 工程量清单项目计量规范(2013-湖北)"],
    ["w-[381px]", "定额库: 湖北省房屋建筑与装饰工程消耗量定额及基价表(2013)"],
    ["w-[229px]", "定额专业: 建筑工程"],
    ["w-[176px]", "当前分部: 金属结构工程"],
    ["flex-1", "计税模式: 增值税(一般计税方法)"],
  ];
  return (
    <footer className="flex h-5 shrink-0 gap-[2px] text-xs">
      {items.map(([w, t]) => (
        <div key={t} className={`${w} overflow-hidden border border-[#d4d4d4] pl-px leading-[18px] whitespace-nowrap`}>
          <T>{t}</T>
        </div>
      ))}
    </footer>
  );
}

function Swirl({ color, className, weight }: { color: string; className: string; weight: string }) {
  return (
    <svg viewBox="0 0 24 24" className={className} aria-hidden="true">
      <path
        d="M22 2c-2 3-4 3-7 2.500C8 3 3 7 3 13c0 5.500 4 9 9 9 5.500 0 9-4 8.500-8.500C20 9.500 17 7.500 13.500 8 10 8.500 8 11 8.500 13.500c.4 2.300 2 3.500 4 3.300 1.800-.2 2.900-1.500 2.600-3"
        fill="none"
        stroke={color}
        strokeWidth={weight}
        strokeLinecap="round"
      />
    </svg>
  );
}

function SogouMark({ className }: { className: string }) {
  return (
    <span
      className={`flex -rotate-6 items-center justify-center rounded-[3px] bg-[#f04a1d] font-['Lato',sans-serif] font-black text-white ${className}`}
    >
      S
    </span>
  );
}

function RunningApp({ label, children }: { label: string; children: React.ReactNode }) {
  return (
    <button aria-label={label} className="flex h-full w-[49px] shrink-0 items-stretch justify-center">
      <span className="flex w-10 items-center justify-center border-b-2 border-[#76b9ed]">{children}</span>
    </button>
  );
}

function TaskBar() {
  const app = "flex h-full w-[49px] shrink-0 items-center justify-center";
  return (
    <div className={`flex h-10 shrink-0 items-stretch bg-[#020b0e] text-white ${SANS}`}>
      <button aria-label="开始" className="flex w-12 shrink-0 items-center justify-center bg-black">
        <svg viewBox="0 0 16 16" className="size-4" fill="#fff">
          <path d="M0 2.300l6.500-.9v6.200H0zM7.300 1.300L16 0v7.600H7.300zM0 8.400h6.500v6.200L0 13.700zM7.300 8.400H16V16l-8.700-1.300z" />
        </svg>
      </button>
      <label className="flex w-[344px] shrink-0 items-center bg-[#333]">
        <i className="ml-[9px] size-[22px] rounded-full border-[3px] border-[#f2f2f2]" />
        <input
          aria-label="搜索"
          placeholder="在这里输入你要搜索的内容"
          className="ml-[5px] min-w-0 flex-1 bg-transparent text-sm outline-none placeholder:text-[#9b9b9b]"
        />
        <svg viewBox="0 0 16 18" className="mr-3 h-[18px] w-4" fill="none" stroke="#a8a8a8" aria-hidden="true">
          <rect x="5.500" y="1.500" width="5" height="10" />
          <path d="M2.500 8v6h11V8M8 14v3M5 17h6" />
        </svg>
      </label>
      <div className="ml-[2px] flex">
        <button aria-label="风车" className={app}>
          <svg viewBox="0 0 22 22" className="size-[22px]">
            {[0, 90, 180, 270].map((a) => (
              <g key={a} transform={`rotate(${a} 11 11)`}>
                <path d="M11 11C7.500 9 7 4 9.500.5 14-.8 19 1 20 4.500 16.500 4 12 6 11 11z" fill="#ededed" />
                <path d="M11 11C13 7 16.500 5 20.500 5" stroke="#ededed" strokeWidth="1.500" fill="none" />
              </g>
            ))}
            <circle cx="11" cy="11" r="1.800" fill="#020b0e" />
          </svg>
        </button>
        <button aria-label="漩涡" className={app}>
          <Swirl color="#c9cfd1" className="size-5" weight="2" />
        </button>
        <button aria-label="Edge" className={`${app} pl-2`}>
          <FaEdgeLegacy className="size-5 text-[#0a7ddc]" />
        </button>
        <button aria-label="应用商店" className={`${app} pl-2`}>
          <svg viewBox="0 0 22 24" className="h-6 w-[22px]">
            <path d="M1 6.500h20L20 22l-18 1z" fill="#fff" />
            <path d="M6.500 8V4c0-3 4-3 4 0M10 5c0-4 6-4 6 0v3" fill="none" stroke="#fff" strokeWidth="1.500" />
            <path d="M5.500 11l5-.7v4.200h-5zM11.500 10.200l5.500-.7v5h-5.500zM5.500 15.500h5v4.200l-5-.7zM11.500 15.500H17v5l-5.500-.7z" fill="#020b0e" />
          </svg>
        </button>
        <button aria-label="文件资源管理器" className={`${app} pl-2`}>
          <svg viewBox="0 0 22 20" className="h-5 w-[22px]">
            <path d="M0 1h8l2 2h12v15H0z" fill="#f7d774" />
            <path d="M0 5h22v13H0z" fill="#fde79a" />
            <path d="M4 19v-7h14v7h-4v-3.500H8V19z" fill="#3ba4e8" />
          </svg>
        </button>
        <div className="ml-1 flex">
          <RunningApp label="广联达">
            <Swirl color="#23a7f0" className="size-6" weight="3.600" />
          </RunningApp>
          <RunningApp label="云服务">
            <svg viewBox="0 0 24 24" className="size-6">
              <rect width="24" height="24" rx="3" fill="#1590f0" />
              <path
                d="M14.500 5.500c-1.500-1-3-.3-3 2V16c0 2.500-2 3.200-3.200 1.800M5 12.500c0 3 3.500 3 5 1.500l3-2c2-1.200 5-.8 5 1.300 0 1.600-1.800 2.200-2.800 1.200M8.500 9.500h6"
                fill="none"
                stroke="#fff"
                strokeWidth="1.800"
              />
            </svg>
          </RunningApp>
          <button
            aria-label="计价软件"
            className="flex h-full w-[49px] shrink-0 items-center justify-center border-b-2 border-[#76b9ed] bg-[#33393b]"
          >
            <AppIcon className="size-6" />
          </button>
          <RunningApp label="浏览器">
            <svg viewBox="0 0 24 24" className="size-6">
              <circle cx="11.500" cy="12" r="10" fill="#3fae2a" stroke="#d8f0c8" />
              <circle cx="11.500" cy="12" r="5.500" fill="none" stroke="#fff" strokeWidth="3" />
              <path d="M6 12h11" stroke="#fff" strokeWidth="2.500" />
              <path d="M13.500 14.500h6.500" stroke="#3fae2a" strokeWidth="2.500" />
              <path d="M2 20C5 10 13 3 22 1.500" stroke="#7ed957" strokeWidth="1.300" fill="none" />
            </svg>
          </RunningApp>
        </div>
      </div>
      <div className="ml-auto flex items-center text-xs leading-[18px]">
        <div className="w-[72px] text-center">
          51%
          <br />
          CPU使用
        </div>
        <svg viewBox="0 0 24 16" className="h-4 w-6" fill="none" stroke="#fff" strokeWidth="1.300">
          <path d="M6 11l6-6 6 6" />
        </svg>
        <svg viewBox="0 0 25 16" className="h-4 w-[25px]" fill="none" stroke="#fff">
          <rect x="8.500" y="5.500" width="11" height="8" />
          <rect x="10" y="7" width="8" height="5" fill="#fff" stroke="none" />
          <path d="M20.500 7.500v4M5 2v3M8 2v3M4 5h5v3H4zM6.500 8v3h2" />
        </svg>
        <svg viewBox="0 0 23 16" className="h-4 w-[23px]" fill="none" stroke="#9aa0a2" strokeWidth="1.200">
          <path d="M5 14A11 11 0 0 1 17 3M8 15a8 8 0 0 1 9-8.500M11 15a5 5 0 0 1 6-5" />
          <path d="M14 15a3 3 0 0 1 3-2.500V15z" fill="#fff" stroke="#fff" />
        </svg>
        <svg viewBox="0 0 22 16" className="h-4 w-[22px]" fill="none" stroke="#fff" strokeWidth="1.200">
          <path d="M3 6h3l4-3.500v11L6 10H3zM12.500 5.500q2 2.500 0 5M15 4q3 4 0 8" />
          <path d="M17.500 2.500q4.500 5.500 0 11" stroke="#777" />
        </svg>
        <svg viewBox="0 0 34 16" className="h-4 w-[34px]" fill="none" stroke="#fff">
          <rect x="6.500" y="2.500" width="22" height="12" />
          <path d="M9 5.500h18M9 8.500h18" strokeDasharray="2 1" />
          <path d="M9 11.500h3M14 11.500h8M24 11.500h3" />
        </svg>
        <span className="w-[23px] text-center text-sm">中</span>
        <span className="flex w-[34px] justify-center">
          <SogouMark className="size-[14px] text-xs leading-none" />
        </span>
        <div className="w-[76px] text-center">
          16:28
          <br />
          2017/9/11
        </div>
        <button aria-label="通知" className="flex w-9 justify-center">
          <svg viewBox="0 0 18 18" className="size-[18px]" fill="none" stroke="#fff" strokeWidth="1.300">
            <path d="M1.500 2.500h15v11h-5L9 16l-1.500-2.500h-6z" />
          </svg>
        </button>
        <i className="ml-[10px] h-10 w-[5px] border-l border-[#555]" />
      </div>
    </div>
  );
}

/* ---------- floating pieces ---------- */

function SpeedMonitor() {
  return (
    <div className={`absolute top-[13px] left-[480px] h-[47px] w-[127px] ${SANS}`}>
      <div className="absolute top-1 right-0 bottom-1 left-4 flex items-center rounded-full border border-[#b0b0b0] bg-linear-to-b from-[#fafafa] to-[#dcdcdc] pr-[5px] pl-9 shadow">
        <div className="flex flex-1 flex-col text-[10px] leading-[15px] text-black">
          <span className="flex items-center justify-between">
            <svg viewBox="0 0 6 8" className="h-2 w-[6px]"><path d="M3 0l3 3H4v5H2V3H0z" fill="#e5533c" /></svg>
            0.04K/s
          </span>
          <span className="flex items-center justify-between">
            <svg viewBox="0 0 6 8" className="h-2 w-[6px]"><path d="M3 8l3-3H4V0H2v5H0z" fill="#219a55" /></svg>
            0K/s
          </span>
        </div>
        <svg viewBox="0 0 18 18" className="ml-[5px] size-[18px]" aria-hidden="true">
          <circle cx="8.500" cy="9.500" r="8" fill="#2f78d8" />
          <path d="M4.500 9.500h8M8.500 5.500v8" stroke="#fff" strokeWidth="2" />
          <circle cx="14.500" cy="4" r="3.500" fill="#e03c3c" />
        </svg>
      </div>
      <div className="absolute top-0 left-0 flex size-[47px] items-center justify-center rounded-full border-2 border-[#e8e8e8] bg-linear-to-b from-[#1c7a5a] from-25% to-[#43c55a] to-30% text-sm text-white shadow ring-1 ring-[#999]">
        73%
      </div>
    </div>
  );
}

function InputMethodBar() {
  return (
    <div className={`absolute right-[136px] bottom-[54px] flex h-[23px] w-[170px] items-center border border-[#b8cde0] bg-white pl-[14px] ${SANS}`}>
      <SogouMark className="absolute -top-[3px] -left-[14px] size-[25px] text-2xl leading-none" />
      <span className="w-[23px] text-center text-base leading-5 font-bold text-[#1d73c9]">中</span>
      <svg viewBox="0 0 126 20" className="ml-1 h-5 w-[126px]" aria-hidden="true">
        <circle cx="5" cy="8" r="2" fill="none" stroke="#1d73c9" strokeWidth="1.400" />
        <path d="M9.500 10h3.500v3l-2 3h-1.500l1-3h-1z" fill="#1d73c9" />
        <rect x="27.500" y="3" width="6" height="9" rx="3" fill="#1d73c9" />
        <path d="M25 9c0 7 11 7 11 0M30.500 14v4M27.500 17.500h6" stroke="#1d73c9" strokeWidth="1.400" fill="none" />
        <rect x="44" y="5" width="15" height="11" rx="1" fill="none" stroke="#1d73c9" strokeWidth="1.500" />
        <path d="M46 8h11M46 10.500h11" stroke="#1d73c9" strokeWidth="1.500" strokeDasharray="2 1" />
        <path d="M48 13.500h7" stroke="#1d73c9" strokeWidth="1.500" />
        <circle cx="74" cy="6" r="3" fill="#bcc4d0" />
        <path d="M68 17c0-8 12-8 12 0z" fill="#bcc4d0" />
        <text x="74" y="17" fontSize="8" fontWeight="bold" fill="#8a96a8">17</text>
        <path d="M92 4l-5 3 1.500 4 2-1v8h9v-8l2 1L103 7l-5-3c-1 2-5 2-6 0z" fill="#1d73c9" />
        <path d="M111 16l7-7" stroke="#1d73c9" strokeWidth="3" strokeLinecap="round" />
        <path d="M121 3.500a4.500 4.500 0 1 0 2.500 5l-3.500.5-2-2z" fill="#1d73c9" />
      </svg>
    </div>
  );
}

function Marks() {
  return (
    <>
      <svg viewBox="0 0 236 66" className="pointer-events-none absolute top-[233px] left-[446px] h-[66px] w-[236px]">
        <ellipse cx="118" cy="33" rx="114" ry="29.500" fill="none" stroke="#0000f8" strokeWidth="7" />
      </svg>
      <svg viewBox="0 0 150 52" className="pointer-events-none absolute top-[545px] left-[265px] h-[52px] w-[150px]">
        <ellipse cx="75" cy="26" rx="71" ry="22" fill="none" stroke="#0000f8" strokeWidth="7" />
      </svg>
    </>
  );
}

export default function App() {
  return (
    <div className="relative flex h-screen flex-col overflow-hidden bg-[#f0f0f0] font-['Noto_Sans_CJK_SC',sans-serif] text-black">
      <TitleBar />
      <MenuBar />
      <MainToolbar />
      <main className="flex min-h-0 flex-1">
        <SideTabs />
        <SectionPanel />
        <div className="flex min-w-0 flex-1 flex-col pb-[3px]">
          <GridToolbar />
          <BillGrid />
          <div className="mt-2 flex h-[22px] shrink-0">
            <button className="ml-[2px] h-5 border-t-2 border-l-2 border-[#808080] bg-[#f8f8f8] pr-4 pl-1 text-xs">
              工料机显示
            </button>
          </div>
          <div className="flex min-h-0 flex-1">
            <ResourceGrid />
            <ActionPane />
          </div>
        </div>
      </main>
      <StatusBar />
      <TaskBar />
      <div className="absolute top-[341px] left-[180px] flex h-[100px] w-[6px] flex-col items-center justify-between border border-[#808080] bg-[#f0f0f0] py-[6px]">
        <i className="size-px bg-[#000080]" />
        <i className="size-px bg-[#000080]" />
      </div>
      <QueryDialog />
      <Marks />
      <SpeedMonitor />
      <InputMethodBar />
    </div>
  );
}
